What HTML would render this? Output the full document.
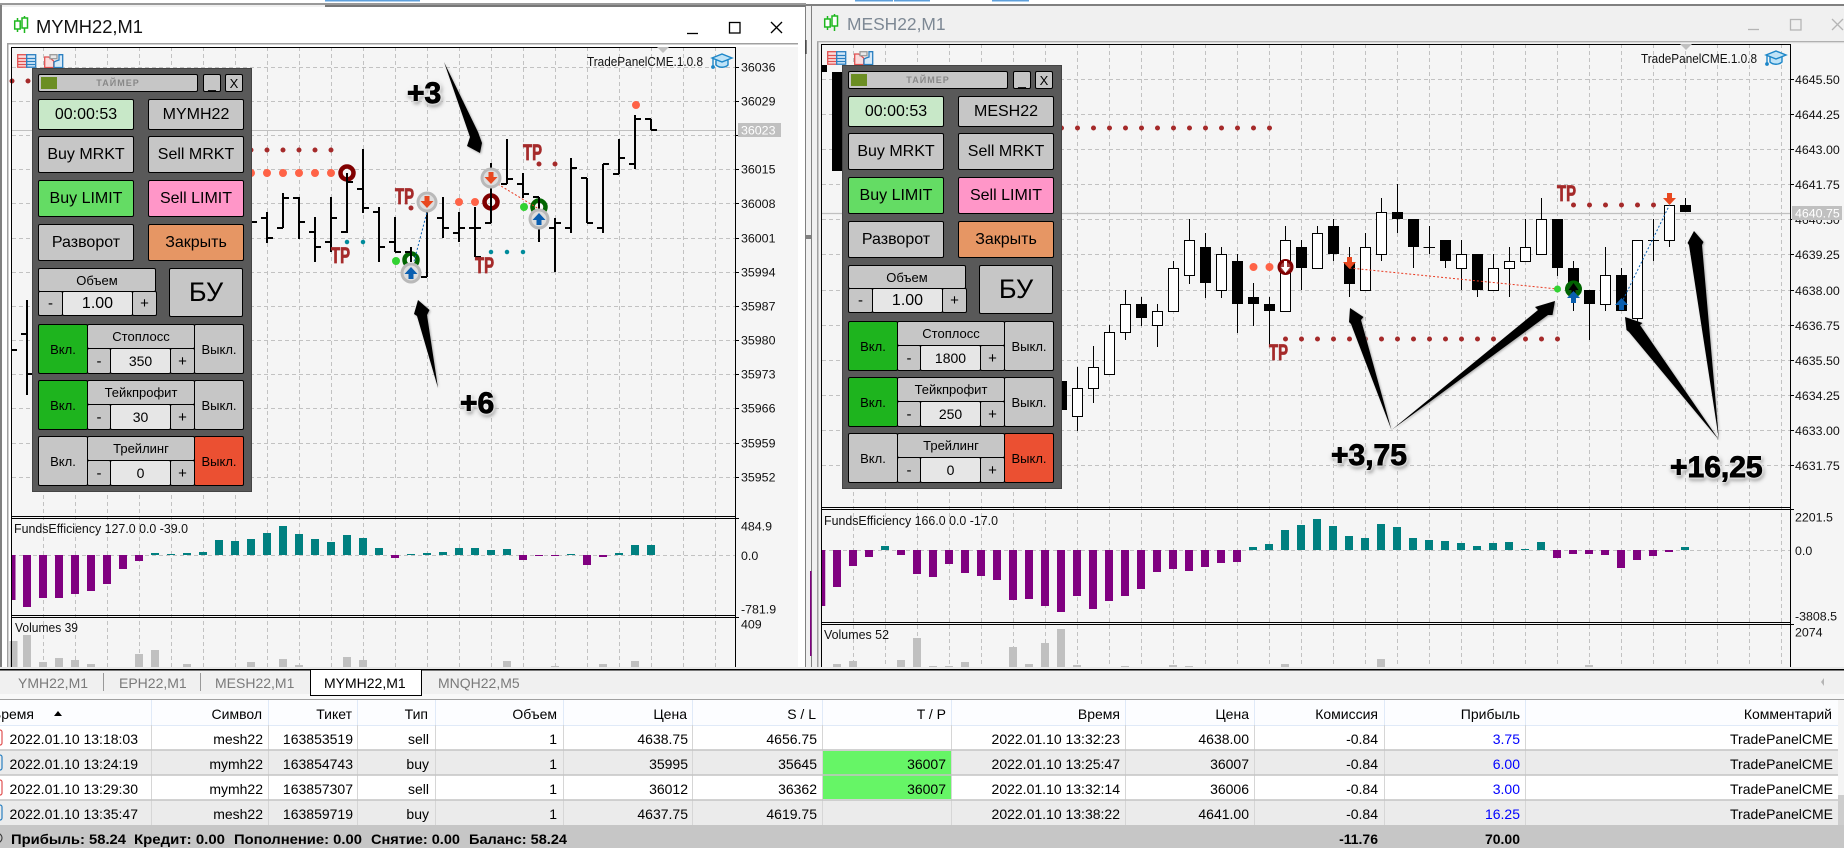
<!DOCTYPE html>
<html><head><meta charset="utf-8"><title>MT5</title>
<style>
html,body{margin:0;padding:0;background:#f0f0f0}
#r{position:relative;width:1844px;height:848px;overflow:hidden;font-family:"Liberation Sans",sans-serif;background:#f0f0f0}
svg{position:absolute;left:0;top:0}
.p{position:absolute;width:220px;height:424px;background:#595959;box-sizing:border-box;border:1px solid #444}
.p div{position:absolute;box-sizing:border-box;border:1px solid #000;border-radius:2px;background:#c6c6c6;display:flex;align-items:center;justify-content:center;color:#000;font-size:16px;white-space:nowrap}
.p div.s{font-size:13px}.p div.v{background:#e6e6e6;font-size:14px}
.p div.g{background:#1eb41e}.p div.o{background:#eb5032}
</style></head><body><div id="r">
<svg width="1844" height="848" viewBox="0 0 1844 848" font-family="'Liberation Sans',sans-serif">
<defs>
<path id="dn" d="M-2.500-6h5v5h4l-6.500 7-6.500-7h4z" fill="#e8481f"/>
<path id="up" d="M-2.500 6h5v-5h4l-6.500-7-6.500 7h4z" fill="#0a5fb0"/>
<g id="gc"><circle r="10.500" fill="#b9b9b9"/><circle r="7.500" fill="#dedede"/></g>
<g id="hat" fill="#bfe3f7" stroke="#1c86c8" stroke-width="1.400"><path d="M4 7v5c3 3 9 3 12 0V7"/><path d="M0 5L10 1l10 4-10 4z"/><path d="M1 5v8" fill="none"/><circle cx="1" cy="14" r="1.200" fill="#1c86c8"/></g>
<g id="tb" fill="none" stroke-width="1.300"><rect x=".7" y=".7" width="9" height="12.500" fill="#fbdcdc" stroke="#e05050"/><path d="M1 4.500h8M1 7.500h8M1 10.500h8" stroke="#e05050"/><rect x="9.700" y=".7" width="9" height="12.500" fill="#d6e9f8" stroke="#2a7fc0"/><path d="M10 4.500h8M10 7.500h8M10 10.500h8" stroke="#2a7fc0"/><g transform="translate(27,0)"><path d="M.7 3h4l5 4v6.500h-9z" fill="#fbdcdc" stroke="#e05050"/><path d="M12 7l3-1V.7h3.700v12.800H10V8z" fill="#d6e9f8" stroke="#2a7fc0"/><rect x="6" y=".7" width="7" height="4" fill="#e8e8e8" stroke="#999"/></g></g>
<g id="ci" fill="#fff" stroke="#1fb81f" stroke-width="1.500"><path d="M3.500 5v-3M3.500 13v3M10.500 2v-2M10.500 12v5" fill="none"/><rect x=".7" y="5" width="5.500" height="8"/><rect x="8" y="2" width="5.500" height="10"/></g>
</defs>

<!-- top strip -->
<rect width="1844" height="848" fill="#f0f0f0"/>
<rect width="1844" height="4" fill="#fff"/>
<path d="M855 0h38v1.500h-38zM894 0h36v1.500h-36zM992 0h37v1.500h-37zM325 0h95v1.500h-95z" fill="#5ea0dc"/>
<rect x="0" y="3" width="806" height="2" fill="#999"/>
<rect x="325" y="5" width="481" height="2" fill="#777"/>
<rect x="806" y="4" width="1038" height="2" fill="#808080"/>

<!-- left window -->
<rect x="0" y="7" width="806" height="662" fill="#fff"/>
<rect x="0" y="5" width="2" height="664" fill="#808080"/>
<rect x="7" y="43" width="791" height="1.500" fill="#a0a0a0"/>
<rect x="7" y="43" width="1.500" height="626" fill="#a0a0a0"/>
<use href="#ci" x="14" y="16"/>
<text x="36" y="33" font-size="18" textLength="107" lengthAdjust="spacingAndGlyphs" fill="#111">MYMH22,M1</text>
<path d="M687 33.500h11" stroke="#000" stroke-width="1.300"/>
<rect x="729.500" y="22.500" width="10.500" height="10.500" fill="none" stroke="#000" stroke-width="1.300"/>
<path d="M771 22l11 11M782 22l-11 11" stroke="#000" stroke-width="1.300"/>
<rect x="11" y="47" width="787" height="620" fill="#f5f5f5"/>

<!-- gap between windows -->
<rect x="805" y="6" width="1" height="663" fill="#808080"/>
<rect x="806" y="6" width="5" height="663" fill="#f0f0f0"/>
<rect x="811" y="6" width="1" height="663" fill="#808080"/>
<path d="M806 40v14M806 236h5M806 238h5" stroke="#111"/>
<rect x="810" y="571" width="1.500" height="85" fill="#800080"/>
<rect x="817" y="41" width="1.500" height="628" fill="#a0a0a0"/>
<rect x="817" y="41" width="1027" height="1.300" fill="#b0b0b0"/>
<rect x="821" y="44" width="1023" height="623" fill="#f5f5f5"/>
<use href="#ci" x="824" y="14"/>
<text x="847" y="30" font-size="17.400" fill="#7d8894">MESH22,M1</text>
<path d="M1748 29.500h11" stroke="#b5b5b5" stroke-width="1.300"/>
<rect x="1790.500" y="19.500" width="10.500" height="10.500" fill="none" stroke="#b5b5b5" stroke-width="1.300"/>
<path d="M1832 19l11 11M1843 19l-11 11" stroke="#b5b5b5" stroke-width="1.300"/>

<!-- LEFT CHART grid -->
<g stroke="#c2c2c2" fill="none" stroke-dasharray="4 3">
<path d="M43.500 47V667M75.500 47V667M107.500 47V667M139.500 47V667M171.500 47V667M203.500 47V667M235.500 47V667M267.500 47V667M299.500 47V667M331.500 47V667M363.500 47V667M395.500 47V667M427.500 47V667M459.500 47V667M491.500 47V667M523.500 47V667M555.500 47V667M587.500 47V667M619.500 47V667M651.500 47V667M683.500 47V667M715.500 47V667"/>
<path d="M12 67.500H735M12 101.500H735M12 135.500H735M12 169.500H735M12 203.500H735M12 238.500H735M12 272.500H735M12 306.500H735M12 340.500H735M12 374.500H735M12 408.500H735M12 443.500H735M12 477.500H735M12 555.500H735"/>
</g>
<path d="M12 130.500H735" stroke="#c0c0c0"/>
<!-- left volumes -->
<path d="M13.500 667V641M27 667V635M43 667V662M59 667V658M75 667V660M91 667V664M139 667V654M155 667V650M187 667V664M251 667V662M283 667V659M299 667V665M347 667V657M363 667V660M507 667V661M555 667V666M603 667V664M635 667V661" stroke="#c0c0c0" stroke-width="8"/>
<!-- left funds -->
<path d="M13.500 555V600" stroke="#800080" stroke-width="4"/>
<path d="M27 555V607M43 555V598M59 555V598M75 555V594M91 555V591M107 555V584M123 555V569M139 555V561M395 555V558M523 555V560M539 555V556M555 555V556M587 555V565M603 555V557" stroke="#800080" stroke-width="8"/>
<path d="M155 555V553M171 555V554M187 555V553M203 555V552M219 555V540M235 555V541M251 555V539M267 555V533M283 555V526M299 555V534M315 555V539M331 555V542M347 555V535M363 555V538M379 555V548M411 555V554M427 555V553M443 555V552M459 555V548M475 555V548M491 555V550M507 555V549M571 555V554M619 555V553M635 555V545M651 555V545" stroke="#008080" stroke-width="8"/>
<!-- left dots under bars -->
<g fill="none" stroke-linecap="round" stroke-dasharray="0 16">
<path d="M12 81H29M251 150H332M539 164H556M411 208H412" stroke="#a52a2a" stroke-width="5"/>
<path d="M251 173H332M459 202H476M636 105H637" stroke="#ff6347" stroke-width="8"/>
<path d="M347 242H364M491 252H524" stroke="#008b9b" stroke-width="4.500"/>
</g>
<g fill="none" stroke-width="4.500">
<circle cx="347" cy="173" r="6.500" stroke="#800000"/><circle cx="491" cy="202" r="6.500" stroke="#800000"/>
<circle cx="411" cy="260" r="6.500" stroke="#006400"/><circle cx="539" cy="207" r="6.500" stroke="#006400"/>
</g>
<!-- left OHLC bars -->
<path fill="none" stroke="#000" stroke-width="2" d="M27 300V395M21 334h6M27 374h6M12 350h5M251 222h6
M267 212V243M261 218h6M267 238h6M283 193V228M277 228h6M283 198h6M299 197V239M293 198h6M299 222h6M315 217V262M309 232h6M315 247h6M331 197V252M325 242h6M331 218h6M347 173V233M341 232h6M347 182h6M363 149V213M357 189h6M363 208h6M379 207V262M373 212h6M379 247h6M395 217V252M389 242h6M395 252h6M411 247V262M405 252h6M427 212V277M421 277h6M443 197V238M437 218h6M443 228h6M459 212V242M453 233h6M459 228h6M475 207V257M469 228h6M475 228h6M475 257h6M491 163V223M485 223h6M507 139V184M501 184h6M507 179h6M523 173V198M517 184h6M523 194h6M539 197V242M533 197h6M555 218V272M549 228h6M555 223h6M571 158V233M565 228h6M571 168h6M587 178V223M581 178h6M587 223h6M603 164V233M597 228h6M603 164h6M619 139V174M613 174h6M619 158h6M635 115V169M629 164h6M635 119h6M651 119V130M645 119h6M651 130h6"/>
<path d="M411 273L427 212" fill="none" stroke-width="1" stroke-dasharray="2 2" stroke="#0a5fb0"/>
<path d="M491 180L539 209" fill="none" stroke-width="1" stroke-dasharray="2 2" stroke="#e8381f"/>
<circle cx="396" cy="261" r="4" fill="#32d232"/><circle cx="524" cy="207" r="4" fill="#32d232"/>
<use href="#gc" x="427" y="202"/><use href="#dn" x="427" y="202"/>
<use href="#gc" x="491" y="178"/><use href="#dn" x="491" y="178"/>
<use href="#gc" x="411" y="273"/><use href="#up" x="411" y="273"/>
<use href="#gc" x="539" y="219"/><use href="#up" x="539" y="219"/>
<g font-size="22" font-weight="bold" fill="#a52a2a" stroke="#a52a2a" stroke-width=".8">
<text x="331" y="263" textLength="19" lengthAdjust="spacingAndGlyphs">TP</text>
<text x="395" y="204" textLength="19" lengthAdjust="spacingAndGlyphs">TP</text>
<text x="475" y="273" textLength="19" lengthAdjust="spacingAndGlyphs">TP</text>
<text x="523" y="160" textLength="19" lengthAdjust="spacingAndGlyphs">TP</text>
</g>
<!-- left frame -->
<path d="M11.500 667V47.500H735.500V667M11 516.500H735M11 518.500H735M11 615.500H735M11 617.500H735" fill="none" stroke="#000"/>
<path d="M735 67.500h4M735 101.500h4M735 135.500h4M735 169.500h4M735 203.500h4M735 238.500h4M735 272.500h4M735 306.500h4M735 340.500h4M735 374.500h4M735 408.500h4M735 443.500h4M735 477.500h4M735 518.500h4M735 617.500h4" stroke="#000"/>
<path d="M657 47h12l-6 6z" fill="#c0c0c0"/>
<use href="#tb" x="17" y="54"/>
<text x="587" y="66" font-size="13" textLength="116" lengthAdjust="spacingAndGlyphs" fill="#111">TradePanelCME.1.0.8</text>
<use href="#hat" x="712" y="53"/>
<g font-size="12.400" fill="#111">
<text x="741" y="71.500">36036</text><text x="741" y="105.500">36029</text><text x="741" y="173.500">36015</text><text x="741" y="208">36008</text><text x="741" y="242.500">36001</text><text x="741" y="276.500">35994</text><text x="741" y="310.500">35987</text><text x="741" y="344.500">35980</text><text x="741" y="378.500">35973</text><text x="741" y="412.500">35966</text><text x="741" y="447.500">35959</text><text x="741" y="481.500">35952</text>
<text x="741" y="530.500">484.9</text><text x="741" y="560">0.0</text><text x="741" y="613.500">-781.9</text><text x="741" y="628.500">409</text>
<text x="14" y="533" font-size="13" textLength="174" lengthAdjust="spacingAndGlyphs">FundsEfficiency 127.0 0.0 -39.0</text>
<text x="15" y="632" font-size="13" textLength="63" lengthAdjust="spacingAndGlyphs">Volumes 39</text>
</g>
<rect x="738" y="123" width="43" height="14" fill="#c0c0c0"/>
<text x="741" y="134.500" font-size="12.400" fill="#fff">36023</text>

<!-- RIGHT CHART grid -->
<g stroke="#c2c2c2" fill="none" stroke-dasharray="4 3">
<path d="M853.500 44V667M885.500 44V667M917.500 44V667M949.500 44V667M981.500 44V667M1013.500 44V667M1045.500 44V667M1077.500 44V667M1109.500 44V667M1141.500 44V667M1173.500 44V667M1205.500 44V667M1237.500 44V667M1269.500 44V667M1301.500 44V667M1333.500 44V667M1365.500 44V667M1397.500 44V667M1429.500 44V667M1461.500 44V667M1493.500 44V667M1525.500 44V667M1557.500 44V667M1589.500 44V667M1621.500 44V667M1653.500 44V667M1685.500 44V667M1717.500 44V667M1749.500 44V667M1781.500 44V667"/>
<path d="M822 79.500H1790M822 114.500H1790M822 149.500H1790M822 184.500H1790M822 219.500H1790M822 254.500H1790M822 290.500H1790M822 325.500H1790M822 360.500H1790M822 395.500H1790M822 430.500H1790M822 465.500H1790M822 550.500H1790"/>
</g>
<path d="M822 213.500H1790" stroke="#c0c0c0" stroke-width="1.300"/>
<!-- right volumes -->
<path d="M837 667V664M853 667V661M901 667V660M917 667V638M933 667V666M949 667V666M965 667V662M1013 667V647M1029 667V664M1045 667V643M1061 667V629M1077 667V665M1125 667V666M1173 667V665M1189 667V666M1285 667V664M1381 667V659M1589 667V665" stroke="#c0c0c0" stroke-width="8"/>
<!-- right funds -->
<path d="M823.500 550V606" stroke="#800080" stroke-width="3.500"/>
<path d="M837 550V587M853 550V566M869 550V557M901 550V555M917 550V574M933 550V577M949 550V564M965 550V573M981 550V576M997 550V580M1013 550V600M1029 550V599M1045 550V606M1061 550V612M1077 550V596M1093 550V609M1109 550V601M1125 550V596M1141 550V589M1157 550V572M1173 550V569M1189 550V571M1205 550V567M1221 550V563M1237 550V562M1557 550V558M1573 550V554M1589 550V554M1605 550V555M1621 550V568M1637 550V560M1653 550V556M1669 550V552" stroke="#800080" stroke-width="8"/>
<path d="M885 550V546M1253 550V547M1269 550V544M1285 550V530M1301 550V525M1317 550V519M1333 550V526M1349 550V536M1365 550V538M1381 550V524M1397 550V527M1413 550V538M1429 550V540M1445 550V541M1461 550V543M1477 550V546M1493 550V543M1509 550V542M1525 550V549M1541 550V542M1685 550V547" stroke="#008080" stroke-width="8"/>
<!-- right dots -->
<g fill="none" stroke-linecap="round" stroke-dasharray="0 16">
<path d="M1061.500 128H1270M1285.500 339H1558M1573.500 205H1654" stroke="#a52a2a" stroke-width="5"/>
<path d="M1253.500 267H1270" stroke="#ff6347" stroke-width="8"/>
</g>
<!-- right candles: wicks -->
<path stroke="#000" fill="none" d="M1077.500 367V431M1093.500 346V403M1109.500 325V374M1125.500 290V340M1141.500 297V326M1157.500 304V347M1173.500 261V311M1189.500 219V284M1205.500 233V298M1221.500 247V298M1237.500 254V333M1253.500 283V326M1269.500 297V347M1285.500 226V311M1301.500 240V290M1317.500 226V268M1333.500 219V261M1349.500 247V297M1365.500 233V290M1381.500 198V261M1397.500 184V233M1413.500 219V268M1429.500 226V254M1423.500 247.500H1435M1445.500 240V268M1461.500 240V290M1477.500 254V297M1493.500 254V290M1509.500 247V297M1525.500 219V261M1541.500 198V254M1557.500 219V276M1573.500 261V311M1589.500 290V340M1605.500 247V311M1621.500 268V311M1637.500 240V325M1653.500 219V261M1648 240.500H1659M1669.500 205V247M1685.500 198V212"/>
<!-- white bodies -->
<g fill="#fff" stroke="#000">
<rect x="1072.500" y="388.500" width="10" height="28"/><rect x="1088.500" y="367.500" width="10" height="21"/><rect x="1104.500" y="332.500" width="10" height="42"/><rect x="1120.500" y="304.500" width="10" height="28"/><rect x="1152.500" y="311.500" width="10" height="14"/><rect x="1168.500" y="268.500" width="10" height="43"/><rect x="1184.500" y="240.500" width="10" height="35"/><rect x="1216.500" y="254.500" width="10" height="36"/><rect x="1280.500" y="240.500" width="10" height="71"/><rect x="1312.500" y="233.500" width="10" height="35"/><rect x="1360.500" y="247.500" width="10" height="43"/><rect x="1376.500" y="212.500" width="10" height="42"/><rect x="1456.500" y="254.500" width="10" height="14"/><rect x="1488.500" y="268.500" width="10" height="22"/><rect x="1504.500" y="261.500" width="10" height="7"/><rect x="1520.500" y="247.500" width="10" height="14"/><rect x="1536.500" y="219.500" width="10" height="35"/><rect x="1600.500" y="275.500" width="10" height="29"/><rect x="1632.500" y="240.500" width="10" height="78"/><rect x="1664.500" y="205.500" width="10" height="35"/>
</g>
<!-- black bodies -->
<g fill="#000">
<rect x="822" y="65" width="5" height="7"/><rect x="832" y="72" width="11" height="99"/><rect x="1056" y="381" width="11" height="29"/>
<rect x="1136" y="304" width="11" height="14"/><rect x="1200" y="247" width="11" height="36"/><rect x="1232" y="261" width="11" height="43"/><rect x="1248" y="297" width="11" height="7"/><rect x="1264" y="304" width="11" height="7"/><rect x="1296" y="247" width="11" height="21"/><rect x="1328" y="226" width="11" height="28"/><rect x="1344" y="263" width="11" height="21"/><rect x="1392" y="212" width="11" height="7"/><rect x="1408" y="219" width="11" height="28"/><rect x="1440" y="240" width="11" height="21"/><rect x="1472" y="254" width="11" height="36"/><rect x="1552" y="219" width="11" height="49"/><rect x="1568" y="268" width="11" height="19"/><rect x="1584" y="290" width="11" height="14"/><rect x="1616" y="275" width="11" height="36"/><rect x="1680" y="205" width="11" height="7"/>
</g>
<path d="M1349.500 268L1557.500 289" fill="none" stroke="#e8381f" stroke-dasharray="2 2"/>
<path d="M1621.500 303L1669.500 205" fill="none" stroke="#0a5fb0" stroke-dasharray="2 2"/>
<circle cx="1285.500" cy="267" r="6.500" fill="#a04040" stroke="#800000" stroke-width="3"/>
<path d="M1284 261h3v6h3l-4.500 6-4.500-6h3z" fill="#fff"/>
<circle cx="1573.500" cy="289" r="7" fill="#0a5a0a" stroke="#006400" stroke-width="3"/>
<path d="M1573.500 283l5 7h-3v3h-4v-3h-3z" fill="#000"/>
<circle cx="1557.500" cy="289" r="3.500" fill="#32d232"/>
<use href="#dn" x="1349.500" y="263"/><use href="#up" x="1573.500" y="297"/><use href="#up" x="1621.500" y="304"/><use href="#dn" x="1669.500" y="199"/>
<g font-size="22" font-weight="bold" fill="#a52a2a" stroke="#a52a2a" stroke-width=".8">
<text x="1269" y="360" textLength="19" lengthAdjust="spacingAndGlyphs">TP</text>
<text x="1557" y="201" textLength="19" lengthAdjust="spacingAndGlyphs">TP</text>
</g>
<!-- right frame -->
<path d="M821.500 667V44.500H1790.500V667M821 507.500H1790M821 509.500H1790M821 622.500H1790M821 624.500H1790" fill="none" stroke="#000"/>
<path d="M1790 79.500h4M1790 114.500h4M1790 149.500h4M1790 184.500h4M1790 219.500h4M1790 254.500h4M1790 290.500h4M1790 325.500h4M1790 360.500h4M1790 395.500h4M1790 430.500h4M1790 465.500h4M1790 509.500h4M1790 624.500h4" stroke="#000"/>
<path d="M1680 44h12l-6 6z" fill="#c0c0c0"/>
<use href="#tb" x="827" y="51"/>
<text x="1641" y="63" font-size="13" textLength="116" lengthAdjust="spacingAndGlyphs" fill="#111">TradePanelCME.1.0.8</text>
<use href="#hat" x="1766" y="50"/>
<g font-size="12.400" fill="#111">
<text x="1795" y="84">4645.50</text><text x="1795" y="119">4644.25</text><text x="1795" y="154">4643.00</text><text x="1795" y="189">4641.75</text><text x="1795" y="224">4640.50</text><text x="1795" y="259">4639.25</text><text x="1795" y="295">4638.00</text><text x="1795" y="330">4636.75</text><text x="1795" y="365">4635.50</text><text x="1795" y="400">4634.25</text><text x="1795" y="435">4633.00</text><text x="1795" y="470">4631.75</text>
<text x="1795" y="521.500">2201.5</text><text x="1795" y="555">0.0</text><text x="1795" y="620.500">-3808.5</text><text x="1795" y="636.500">2074</text>
<text x="824" y="525" font-size="13" textLength="174" lengthAdjust="spacingAndGlyphs">FundsEfficiency 166.0 0.0 -17.0</text>
<text x="824" y="639" font-size="13" textLength="65" lengthAdjust="spacingAndGlyphs">Volumes 52</text>
</g>
<rect x="1792" y="206" width="50" height="14" fill="#c0c0c0"/>
<text x="1795" y="217.500" font-size="12.400" fill="#fff">4640.75</text>

<!-- annotations -->
<g fill="#000" style="filter:drop-shadow(1px 1px 1px #aaa)">
<polygon points="444,62 478,132 482,143 480,153 467,146 470,137"/>
<polygon points="438,388 427,315 429.500,310 418,300 414,314 417,316"/>
<polygon points="1391.500,430 1361,320 1363.500,317 1350,308 1349,322 1351,324"/>
<polygon points="1391.500,430 1548,315 1552.500,315 1555,301 1535,307 1538,310"/>
<polygon points="1719,440 1640,325 1642.500,323 1625,317 1626.500,330 1629,332"/>
<polygon points="1719,440 1702,245 1703.500,242 1694,231 1687.500,243 1689,245"/>
</g>
<g font-size="30" font-weight="bold" fill="#000" stroke="#000" stroke-width=".9" style="filter:drop-shadow(0 0 1.500px #fff) drop-shadow(0 0 1.500px #fff) drop-shadow(1px 2px 1px #999)">
<text x="407" y="103">+3</text><text x="460" y="413">+6</text><text x="1331" y="465">+3,75</text><text x="1670" y="477">+16,25</text>
</g>

<!-- tabs -->
<rect x="0" y="667" width="1844" height="2" fill="#e8e8e8"/>
<rect x="0" y="669" width="1844" height="30" fill="#f0f0f0"/>
<rect x="0" y="669" width="1844" height="1.500" fill="#000"/>
<rect x="0" y="694" width="1844" height="5" fill="#f8f8f8"/>
<rect x="0" y="699" width="1844" height="1.500" fill="#a0a0a0"/>
<path d="M103.500 673V691M200.500 673V691" stroke="#999"/>
<rect x="310.500" y="669.500" width="111" height="26" fill="#fff" stroke="#000"/>
<g font-size="14" fill="#7a7a7a">
<text x="18" y="688">YMH22,M1</text><text x="119" y="688">EPH22,M1</text><text x="215" y="688">MESH22,M1</text><text x="438" y="688">MNQH22,M5</text>
</g>
<text x="324" y="688" font-size="14" fill="#000">MYMH22,M1</text>
<path d="M1824 678v8l-3-4z" fill="#b5b5b5"/>

<!-- table -->
<rect x="0" y="700" width="1844" height="25" fill="#fcfdff"/>
<rect x="0" y="725" width="1844" height="25" fill="#fff"/>
<rect x="0" y="750" width="1844" height="25" fill="#ebebeb"/>
<rect x="0" y="775" width="1844" height="25" fill="#fff"/>
<rect x="0" y="800" width="1844" height="25" fill="#ebebeb"/>
<rect x="822" y="751" width="129" height="48" fill="#66f566"/>
<path d="M151.500 700V725M268.500 700V725M357.500 700V725M435.500 700V725M563.500 700V725M692.500 700V725M822.500 700V725M951.500 700V725M1125.500 700V725M1254.500 700V725M1384.500 700V725M1525.500 700V725M0 725.500H1838" stroke="#e0eaf8"/>
<path d="M151.500 725V825M268.500 725V825M357.500 725V825M435.500 725V825M563.500 725V825M692.500 725V825M822.500 725V825M951.500 725V825M1125.500 725V825M1254.500 725V825M1384.500 725V825M1525.500 725V825" stroke="#d6d6d6"/>
<path d="M0 750H1838M0 775H1838M0 800H1838" stroke="#c4c4c4" stroke-width="1.500"/>
<rect x="1838" y="700" width="6" height="95" fill="#f4f4f4"/>
<rect x="1838" y="795" width="6" height="30" fill="#cdcdcd"/>
<g fill="none" stroke-width="1.200">
<rect x="-8" y="730" width="10" height="15" rx="2" stroke="#e05050"/><rect x="-8" y="755" width="10" height="15" rx="2" stroke="#2a7fc0"/><rect x="-8" y="780" width="10" height="15" rx="2" stroke="#e05050"/><rect x="-8" y="805" width="10" height="15" rx="2" stroke="#2a7fc0"/>
</g>
<path d="M54 716l4-5 4 5z" fill="#000"/>
<g font-size="14" fill="#000" text-anchor="end">
<text x="34" y="719">Время</text><text x="262" y="719">Символ</text><text x="352" y="719">Тикет</text><text x="428" y="719">Тип</text><text x="557" y="719">Объем</text><text x="687" y="719">Цена</text><text x="816" y="719">S / L</text><text x="946" y="719">T / P</text><text x="1120" y="719">Время</text><text x="1249" y="719">Цена</text><text x="1378" y="719">Комиссия</text><text x="1520" y="719">Прибыль</text><text x="1832" y="719">Комментарий</text>

<text x="138" y="744">2022.01.10 13:18:03</text><text x="263" y="744">mesh22</text><text x="353" y="744">163853519</text><text x="429" y="744">sell</text><text x="557" y="744">1</text><text x="688" y="744">4638.75</text><text x="817" y="744">4656.75</text><text x="1120" y="744">2022.01.10 13:32:23</text><text x="1249" y="744">4638.00</text><text x="1378" y="744">-0.84</text><text x="1520" y="744" fill="#0000ff">3.75</text><text x="1833" y="744">TradePanelCME</text>

<text x="138" y="769">2022.01.10 13:24:19</text><text x="263" y="769">mymh22</text><text x="353" y="769">163854743</text><text x="429" y="769">buy</text><text x="557" y="769">1</text><text x="688" y="769">35995</text><text x="817" y="769">35645</text><text x="946" y="769">36007</text><text x="1120" y="769">2022.01.10 13:25:47</text><text x="1249" y="769">36007</text><text x="1378" y="769">-0.84</text><text x="1520" y="769" fill="#0000ff">6.00</text><text x="1833" y="769">TradePanelCME</text>

<text x="138" y="794">2022.01.10 13:29:30</text><text x="263" y="794">mymh22</text><text x="353" y="794">163857307</text><text x="429" y="794">sell</text><text x="557" y="794">1</text><text x="688" y="794">36012</text><text x="817" y="794">36362</text><text x="946" y="794">36007</text><text x="1120" y="794">2022.01.10 13:32:14</text><text x="1249" y="794">36006</text><text x="1378" y="794">-0.84</text><text x="1520" y="794" fill="#0000ff">3.00</text><text x="1833" y="794">TradePanelCME</text>

<text x="138" y="819">2022.01.10 13:35:47</text><text x="263" y="819">mesh22</text><text x="353" y="819">163859719</text><text x="429" y="819">buy</text><text x="557" y="819">1</text><text x="688" y="819">4637.75</text><text x="817" y="819">4619.75</text><text x="1120" y="819">2022.01.10 13:38:22</text><text x="1249" y="819">4641.00</text><text x="1378" y="819">-0.84</text><text x="1520" y="819" fill="#0000ff">16.25</text><text x="1833" y="819">TradePanelCME</text>
</g>
<rect x="0" y="825" width="1844" height="23" fill="#c6c6c6"/>
<circle cx="-3" cy="838" r="5" fill="none" stroke="#333"/>
<g font-size="14" font-weight="bold" fill="#000">
<text x="11" y="844" textLength="115" lengthAdjust="spacingAndGlyphs">Прибыль: 58.24</text>
<text x="134" y="844" textLength="91" lengthAdjust="spacingAndGlyphs">Кредит: 0.00</text>
<text x="234" y="844" textLength="128" lengthAdjust="spacingAndGlyphs">Пополнение: 0.00</text>
<text x="371" y="844" textLength="89" lengthAdjust="spacingAndGlyphs">Снятие: 0.00</text>
<text x="469" y="844" textLength="98" lengthAdjust="spacingAndGlyphs">Баланс: 58.24</text>
<text x="1378" y="844" text-anchor="end">-11.76</text>
<text x="1520" y="844" text-anchor="end">70.00</text>
</g>
</svg>

<!-- left panel -->
<div class="p" style="left:32px;top:68px">
<div style="left:5px;top:5px;width:160px;height:18px;font-size:9px;font-weight:bold;color:#888;letter-spacing:1px">ТАЙМЕР</div>
<div style="left:8px;top:8px;width:16px;height:12px;background:#6b8e23;border:0;border-radius:0"></div>
<div style="left:170px;top:5px;width:18px;height:18px;font-size:14px;align-items:flex-end">_</div>
<div style="left:192px;top:5px;width:18px;height:18px;font-size:13px">X</div>
<div style="left:5px;top:30px;width:96px;height:31px;background:#c8e8c8">00:00:53</div>
<div style="left:115px;top:30px;width:96px;height:31px">MYMH22</div>
<div style="left:5px;top:67px;width:96px;height:37px">Buy MRKT</div>
<div style="left:115px;top:67px;width:96px;height:37px">Sell MRKT</div>
<div style="left:5px;top:111px;width:96px;height:37px;background:#64dc64">Buy LIMIT</div>
<div style="left:115px;top:111px;width:96px;height:37px;background:#ff96c8">Sell LIMIT</div>
<div style="left:5px;top:155px;width:96px;height:37px">Разворот</div>
<div style="left:115px;top:155px;width:96px;height:37px;background:#e69664">Закрыть</div>
<div class="s" style="left:5px;top:199px;width:118px;height:24px">Объем</div>
<div class="s" style="left:5px;top:222px;width:25px;height:25px;font-size:15px">-</div>
<div class="v" style="left:29px;top:222px;width:71px;height:25px;font-size:16px">1.00</div>
<div class="s" style="left:99px;top:222px;width:25px;height:25px;font-size:15px">+</div>
<div style="left:136px;top:199px;width:74px;height:49px;font-size:27px">БУ</div>

<div class="s g" style="left:5px;top:255px;width:50px;height:50px">Вкл.</div>
<div class="s" style="left:54px;top:255px;width:108px;height:25px">Стоплосс</div>
<div class="s" style="left:54px;top:279px;width:24px;height:26px;font-size:15px">-</div>
<div class="v" style="left:77px;top:279px;width:61px;height:26px">350</div>
<div class="s" style="left:137px;top:279px;width:25px;height:26px;font-size:15px">+</div>
<div class="s" style="left:161px;top:255px;width:50px;height:50px">Выкл.</div>

<div class="s g" style="left:5px;top:311px;width:50px;height:50px">Вкл.</div>
<div class="s" style="left:54px;top:311px;width:108px;height:25px">Тейкпрофит</div>
<div class="s" style="left:54px;top:335px;width:24px;height:26px;font-size:15px">-</div>
<div class="v" style="left:77px;top:335px;width:61px;height:26px">30</div>
<div class="s" style="left:137px;top:335px;width:25px;height:26px;font-size:15px">+</div>
<div class="s" style="left:161px;top:311px;width:50px;height:50px">Выкл.</div>

<div class="s" style="left:5px;top:367px;width:50px;height:50px">Вкл.</div>
<div class="s" style="left:54px;top:367px;width:108px;height:25px">Трейлинг</div>
<div class="s" style="left:54px;top:391px;width:24px;height:26px;font-size:15px">-</div>
<div class="v" style="left:77px;top:391px;width:61px;height:26px">0</div>
<div class="s" style="left:137px;top:391px;width:25px;height:26px;font-size:15px">+</div>
<div class="s o" style="left:161px;top:367px;width:50px;height:50px">Выкл.</div>
</div>

<!-- right panel -->
<div class="p" style="left:842px;top:65px">
<div style="left:5px;top:5px;width:160px;height:18px;font-size:9px;font-weight:bold;color:#888;letter-spacing:1px">ТАЙМЕР</div>
<div style="left:8px;top:8px;width:16px;height:12px;background:#6b8e23;border:0;border-radius:0"></div>
<div style="left:170px;top:5px;width:18px;height:18px;font-size:14px;align-items:flex-end">_</div>
<div style="left:192px;top:5px;width:18px;height:18px;font-size:13px">X</div>
<div style="left:5px;top:30px;width:96px;height:31px;background:#c8e8c8">00:00:53</div>
<div style="left:115px;top:30px;width:96px;height:31px">MESH22</div>
<div style="left:5px;top:67px;width:96px;height:37px">Buy MRKT</div>
<div style="left:115px;top:67px;width:96px;height:37px">Sell MRKT</div>
<div style="left:5px;top:111px;width:96px;height:37px;background:#64dc64">Buy LIMIT</div>
<div style="left:115px;top:111px;width:96px;height:37px;background:#ff96c8">Sell LIMIT</div>
<div style="left:5px;top:155px;width:96px;height:37px">Разворот</div>
<div style="left:115px;top:155px;width:96px;height:37px;background:#e69664">Закрыть</div>
<div class="s" style="left:5px;top:199px;width:118px;height:24px">Объем</div>
<div class="s" style="left:5px;top:222px;width:25px;height:25px;font-size:15px">-</div>
<div class="v" style="left:29px;top:222px;width:71px;height:25px;font-size:16px">1.00</div>
<div class="s" style="left:99px;top:222px;width:25px;height:25px;font-size:15px">+</div>
<div style="left:136px;top:199px;width:74px;height:49px;font-size:27px">БУ</div>

<div class="s g" style="left:5px;top:255px;width:50px;height:50px">Вкл.</div>
<div class="s" style="left:54px;top:255px;width:108px;height:25px">Стоплосс</div>
<div class="s" style="left:54px;top:279px;width:24px;height:26px;font-size:15px">-</div>
<div class="v" style="left:77px;top:279px;width:61px;height:26px">1800</div>
<div class="s" style="left:137px;top:279px;width:25px;height:26px;font-size:15px">+</div>
<div class="s" style="left:161px;top:255px;width:50px;height:50px">Выкл.</div>

<div class="s g" style="left:5px;top:311px;width:50px;height:50px">Вкл.</div>
<div class="s" style="left:54px;top:311px;width:108px;height:25px">Тейкпрофит</div>
<div class="s" style="left:54px;top:335px;width:24px;height:26px;font-size:15px">-</div>
<div class="v" style="left:77px;top:335px;width:61px;height:26px">250</div>
<div class="s" style="left:137px;top:335px;width:25px;height:26px;font-size:15px">+</div>
<div class="s" style="left:161px;top:311px;width:50px;height:50px">Выкл.</div>

<div class="s" style="left:5px;top:367px;width:50px;height:50px">Вкл.</div>
<div class="s" style="left:54px;top:367px;width:108px;height:25px">Трейлинг</div>
<div class="s" style="left:54px;top:391px;width:24px;height:26px;font-size:15px">-</div>
<div class="v" style="left:77px;top:391px;width:61px;height:26px">0</div>
<div class="s" style="left:137px;top:391px;width:25px;height:26px;font-size:15px">+</div>
<div class="s o" style="left:161px;top:367px;width:50px;height:50px">Выкл.</div>
</div>
</div></body></html>
